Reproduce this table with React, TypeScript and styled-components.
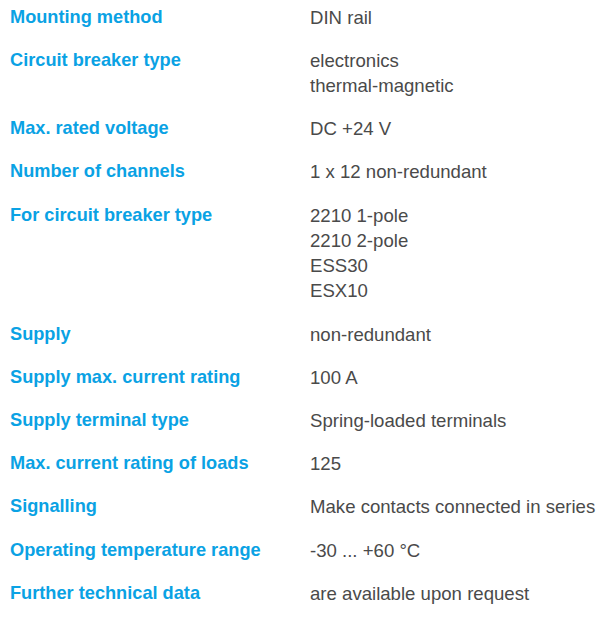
import React from 'react';
import styled, { createGlobalStyle } from 'styled-components';

interface Spec {
  label: string;
  values: string[];
}

const specs: Spec[] = [
  { label: 'Mounting method', values: ['DIN rail'] },
  { label: 'Circuit breaker type', values: ['electronics', 'thermal-magnetic'] },
  { label: 'Max. rated voltage', values: ['DC +24 V'] },
  { label: 'Number of channels', values: ['1 x 12 non-redundant'] },
  { label: 'For circuit breaker type', values: ['2210 1-pole', '2210 2-pole', 'ESS30', 'ESX10'] },
  { label: 'Supply', values: ['non-redundant'] },
  { label: 'Supply max. current rating', values: ['100 A'] },
  { label: 'Supply terminal type', values: ['Spring-loaded terminals'] },
  { label: 'Max. current rating of loads', values: ['125'] },
  { label: 'Signalling', values: ['Make contacts connected in series'] },
  { label: 'Operating temperature range', values: ['-30 ... +60 °C'] },
  { label: 'Further technical data', values: ['are available upon request'] },
];

const GlobalStyle = createGlobalStyle`
  body {
    margin: 0;
    background: #ffffff;
    font-family: "Liberation Sans", Arial, sans-serif;
  }
`;

const Table = styled.div`
  display: flex;
  flex-direction: column;
  gap: 17.9px;
  padding: 4.5px 0 0 10px;
  line-height: 25.3px;
`;

const Row = styled.div`
  display: grid;
  grid-template-columns: 300px 1fr;
`;

const Label = styled.div`
  color: #0aa2e4;
  font-size: 18.2px;
  font-weight: 700;
`;

const Values = styled.div`
  display: flex;
  flex-direction: column;
  color: #4a4a4a;
  font-size: 18.6px;
`;

const App: React.FC = () => (
  <>
    <GlobalStyle />
    <Table>
      {specs.map((spec) => (
        <Row key={spec.label}>
          <Label>{spec.label}</Label>
          <Values>
            {spec.values.map((value) => (
              <span key={value}>{value}</span>
            ))}
          </Values>
        </Row>
      ))}
    </Table>
  </>
);

export default App;
